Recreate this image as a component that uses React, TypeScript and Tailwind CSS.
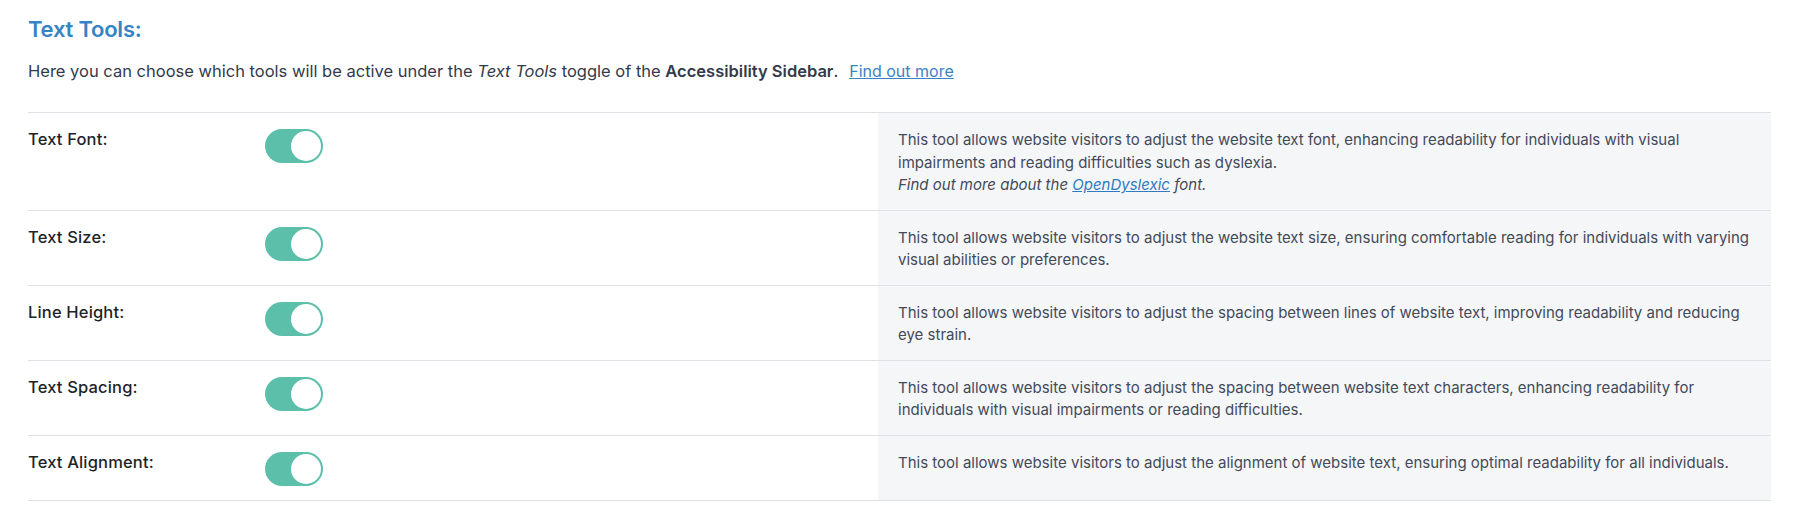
import React from "react";

const rows: { label: string; desc: React.ReactNode }[] = [
  {
    label: "Text Font:",
    desc: (
      <>
        This tool allows website visitors to adjust the website text font, enhancing readability for individuals with visual
        impairments and reading difficulties such as dyslexia.
        <br />
        <em>
          Find out more about the{" "}
          <a href="#" className="text-[#2f7bc0] underline">
            OpenDyslexic
          </a>{" "}
          font.
        </em>
      </>
    ),
  },
  {
    label: "Text Size:",
    desc: "This tool allows website visitors to adjust the website text size, ensuring comfortable reading for individuals with varying visual abilities or preferences.",
  },
  {
    label: "Line Height:",
    desc: "This tool allows website visitors to adjust the spacing between lines of website text, improving readability and reducing eye strain.",
  },
  {
    label: "Text Spacing:",
    desc: "This tool allows website visitors to adjust the spacing between website text characters, enhancing readability for individuals with visual impairments or reading difficulties.",
  },
  {
    label: "Text Alignment:",
    desc: "This tool allows website visitors to adjust the alignment of website text, ensuring optimal readability for all individuals.",
  },
];

function Toggle() {
  return (
    <div className="relative w-[58px] h-[34px] rounded-full bg-[#5cbfa9]">
      <div className="absolute right-[2px] top-[2px] w-[30px] h-[30px] rounded-full bg-white" />
    </div>
  );
}

export default function App() {
  return (
    <div
      className="w-[1800px] h-[529px] bg-white pl-[28px] pr-[29px] pt-[13px]"
      style={{ fontFamily: "Inter, 'Noto Sans', sans-serif" }}
    >
      <h2 className="text-[22px] leading-[32px] font-semibold tracking-[-0.01em] text-[#3683c6]">Text Tools:</h2>
      <p className="mt-[14px] text-[16.5px] leading-[24px] text-[#333a4b]">
        Here you can choose which tools will be active under the <em>Text Tools</em> toggle of the{" "}
        <strong className="font-semibold">Accessibility Sidebar</strong>.
        <a href="#" className="ml-[11px] text-[16px] text-[#3a82c4] underline">
          Find out more
        </a>
      </p>
      <div className="mt-[29px] border-t border-[#dfe0e5]">
        {rows.map((r) => (
          <div key={r.label} className="grid grid-cols-[237px_613px_1fr] border-b border-[#dfe0e5]">
            <div className="pt-[14px] text-[16.5px] leading-[24px] font-medium tracking-[0.01em] text-[#1d2327]">
              {r.label}
            </div>
            <div className="pt-[16px] pb-[14px]">
              <Toggle />
            </div>
            <div className="bg-[#f5f6f8] pl-[20px] pr-[16px] pt-[16px] pb-[13px] text-[15px] leading-[22.5px] text-[#434a58]">
              {r.desc}
            </div>
          </div>
        ))}
      </div>
    </div>
  );
}
